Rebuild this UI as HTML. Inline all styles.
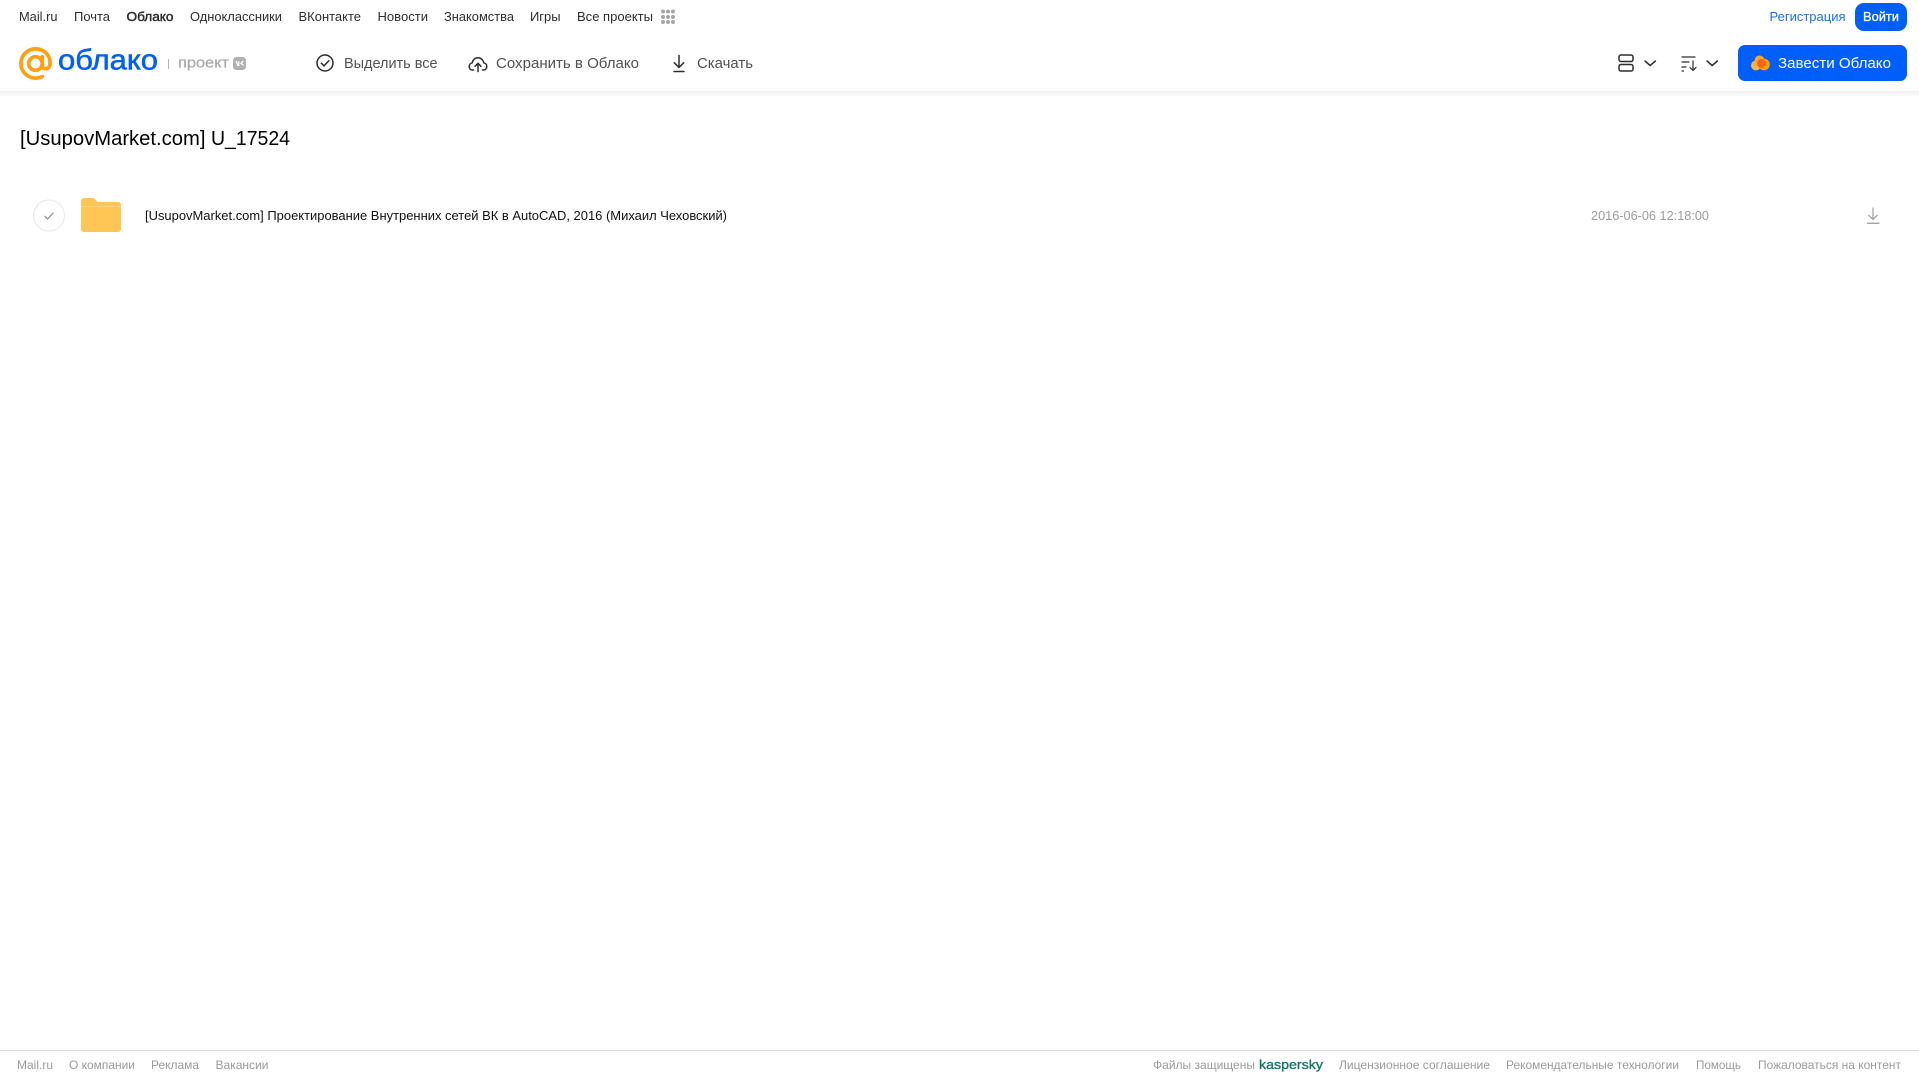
<!DOCTYPE html>
<html lang="ru">
<head>
<meta charset="utf-8">
<title>Облако</title>
<style>
html,body{margin:0;padding:0;background:#fff;width:1919px;height:1079px;overflow:hidden}
svg{display:block;position:absolute;left:0;top:0}
text{font-family:"Liberation Sans",sans-serif;white-space:pre}
.n{font-size:13px;fill:#2c2d2e}
.t{font-size:14.5px;fill:#505153}
.f{font-size:12px;fill:#9a9b9d}
.i{fill:none;stroke:#2c2d2e;stroke-width:1.5;stroke-linecap:round;stroke-linejoin:round}
</style>
</head>
<body>
<svg width="1919" height="1079" viewBox="0 0 1919 1079" xmlns="http://www.w3.org/2000/svg">
<defs>
<linearGradient id="sh" x1="0" y1="0" x2="0" y2="1"><stop offset="0" stop-color="#efeff0"/><stop offset="1" stop-color="#fff"/></linearGradient>
</defs>
<rect x="0" y="91" width="1919" height="6" fill="url(#sh)"/>

<!-- top nav -->
<text class="n" x="19" y="21" textLength="38.500" lengthAdjust="spacingAndGlyphs">Mail.ru</text>
<text class="n" x="74" y="21" textLength="36" lengthAdjust="spacingAndGlyphs">Почта</text>
<text class="n" x="126.500" y="21" textLength="47" lengthAdjust="spacingAndGlyphs" stroke="#2c2d2e" stroke-width=".45">Облако</text>
<text class="n" x="190" y="21" textLength="92" lengthAdjust="spacingAndGlyphs">Одноклассники</text>
<text class="n" x="298.500" y="21" textLength="62.500" lengthAdjust="spacingAndGlyphs">ВКонтакте</text>
<text class="n" x="377.500" y="21" textLength="50.500" lengthAdjust="spacingAndGlyphs">Новости</text>
<text class="n" x="444" y="21" textLength="70" lengthAdjust="spacingAndGlyphs">Знакомства</text>
<text class="n" x="530" y="21" textLength="30.500" lengthAdjust="spacingAndGlyphs">Игры</text>
<text class="n" x="577" y="21" textLength="76" lengthAdjust="spacingAndGlyphs">Все проекты</text>
<g fill="#a5a6a8">
<circle cx="663" cy="11.500" r="2"/><circle cx="668" cy="11.500" r="2"/><circle cx="673" cy="11.500" r="2"/>
<circle cx="663" cy="17" r="2"/><circle cx="668" cy="17" r="2"/><circle cx="673" cy="17" r="2"/>
<circle cx="663" cy="22" r="2"/><circle cx="668" cy="22" r="2"/><circle cx="673" cy="22" r="2"/>
</g>
<text x="1769.500" y="21" font-size="13" fill="#1f6fe8" textLength="76" lengthAdjust="spacingAndGlyphs">Регистрация</text>
<rect x="1855" y="3" width="52" height="28" rx="9" fill="#005ff9"/>
<text x="1863" y="21" font-size="13" fill="#fff" stroke="#fff" stroke-width=".3" textLength="36" lengthAdjust="spacingAndGlyphs">Войти</text>

<!-- logo -->
<g fill="none" stroke="#ffa012" stroke-width="3.700" stroke-linecap="round">
<circle cx="35.500" cy="63.500" r="6.800"/>
<path d="M42.300 56.800v8.400c0 5 7.600 5 7.800-1.500.2-8.500-6-14.800-14.600-14.800-8.100 0-14.600 6.500-14.600 14.600s6.500 14.600 14.600 14.600c2.600 0 4.800-.6 6.800-1.600"/>
</g>
<text x="58" y="69.500" font-size="29" fill="#005ff9" stroke="#005ff9" stroke-width=".55" textLength="100" lengthAdjust="spacingAndGlyphs">облако</text>
<rect x="168" y="59" width="1" height="10" fill="#b5b6b8"/>
<text x="178" y="67.500" font-size="14.500" fill="#a9aaac" stroke="#a9aaac" stroke-width=".25" textLength="51" lengthAdjust="spacingAndGlyphs">проект</text>
<rect x="233" y="57" width="13" height="13" rx="3.500" fill="#b0b1b3"/>
<path d="M236 61l1.800 4.500h1V61M243.500 61l-2.500 2.300 2.700 2.200" fill="none" stroke="#fff" stroke-width="1.200"/>

<!-- actions -->
<circle class="i" cx="325" cy="63" r="8"/>
<path class="i" d="M321.300 63.200l2.700 2.700 4.800-5.200"/>
<text class="t" x="344" y="68" textLength="93.500" lengthAdjust="spacingAndGlyphs">Выделить все</text>
<path class="i" d="M473.500 70h-1c-2 0-3.300-1.600-3.300-3.500 0-1.900 1.300-3.400 3-3.600.5-3 2.900-5.100 5.800-5.100 3 0 5.300 2.200 5.800 5.100 1.800.2 3 1.700 3 3.600 0 1.900-1.400 3.500-3.300 3.500h-1"/>
<path class="i" d="M478 71.500v-8M475 66.300l3-3 3 3"/>
<text class="t" x="496" y="68" textLength="143" lengthAdjust="spacingAndGlyphs">Сохранить в Облако</text>
<path class="i" d="M679 55.500v12M674.300 62.800l4.700 4.700 4.700-4.700M674 71.500h10"/>
<text class="t" x="697" y="68" textLength="56" lengthAdjust="spacingAndGlyphs">Скачать</text>

<!-- right controls -->
<rect class="i" x="1619" y="55" width="14" height="6.500" rx="2"/>
<rect class="i" x="1619" y="64.500" width="14" height="6.500" rx="2"/>
<path class="i" d="M1645 61l5.200 4.500 5.200-4.500"/>
<path class="i" style="stroke-width:1.200" d="M1682 57h13M1682 62h7M1682 67h4M1682 71h1.500M1693 61v9M1690 67.500l3 3 3-3"/>
<path class="i" d="M1707 61l5.200 4.500 5.200-4.500"/>
<rect x="1738" y="45" width="169" height="36" rx="7" fill="#005ff9"/>
<circle cx="1756" cy="65.500" r="5" fill="#ffb347"/>
<circle cx="1759.500" cy="60.500" r="5" fill="#ffa62b"/>
<circle cx="1764" cy="64.500" r="5.800" fill="#ff9e00"/>
<circle cx="1761.500" cy="63.500" r="4.500" fill="#f5641e"/>
<text x="1778" y="68" font-size="14.500" fill="#fff" textLength="113" lengthAdjust="spacingAndGlyphs">Завести Облако</text>

<!-- title -->
<text x="20" y="145" font-size="20" fill="#000" textLength="185.500" lengthAdjust="spacingAndGlyphs">[UsupovMarket.com]</text>
<text x="211" y="145" font-size="20" fill="#000" textLength="79" lengthAdjust="spacingAndGlyphs">U_17524</text>

<!-- row -->
<circle cx="49" cy="215.500" r="15.500" fill="#fff" stroke="#e7e8ea" stroke-width="1"/>
<path d="M44.500 216l3 3 6-6.500" fill="none" stroke="#9a9b9d" stroke-width="1.300"/>
<path d="M81 201c0-1.700 1.300-3 3-3h8.500c1.600 0 2.400.7 3.200 1.700l1.600 2.300H118c1.700 0 3 1.300 3 3v3H81z" fill="#ffc555"/>
<path d="M81 206h40v23c0 1.700-1.300 3-3 3H84c-1.700 0-3-1.300-3-3z" fill="#ffc555"/>
<rect x="81" y="206" width="40" height="1" fill="#ffd27a"/>
<text x="145" y="220" font-size="12.500" fill="#111" textLength="582" lengthAdjust="spacingAndGlyphs">[UsupovMarket.com] Проектирование Внутренних сетей ВК в AutoCAD, 2016 (Михаил Чеховский)</text>
<text x="1591" y="220" font-size="12.500" fill="#9a9b9d" textLength="118" lengthAdjust="spacingAndGlyphs">2016-06-06 12:18:00</text>
<path d="M1873 207.500v12M1868.500 215l4.500 4.500 4.500-4.500" fill="none" stroke="#a5a6a8" stroke-width="1.300"/>
<rect x="1867" y="222.500" width="12.500" height="1.500" fill="#a5a6a8"/>

<!-- footer -->
<rect x="0" y="1050" width="1919" height="1" fill="#d9dadb"/>
<text class="f" x="17" y="1069" textLength="36" lengthAdjust="spacingAndGlyphs">Mail.ru</text>
<text class="f" x="69" y="1069" textLength="66" lengthAdjust="spacingAndGlyphs">О компании</text>
<text class="f" x="151" y="1069" textLength="48" lengthAdjust="spacingAndGlyphs">Реклама</text>
<text class="f" x="215.500" y="1069" textLength="53" lengthAdjust="spacingAndGlyphs">Вакансии</text>
<text class="f" x="1153" y="1069" textLength="102" lengthAdjust="spacingAndGlyphs">Файлы защищены</text>
<text x="1259" y="1069" font-size="13" fill="#11795f" stroke="#11795f" stroke-width=".35" textLength="64" lengthAdjust="spacingAndGlyphs">kaspersky</text>
<text class="f" x="1339" y="1069" textLength="151" lengthAdjust="spacingAndGlyphs">Лицензионное соглашение</text>
<text class="f" x="1506" y="1069" textLength="173" lengthAdjust="spacingAndGlyphs">Рекомендательные технологии</text>
<text class="f" x="1696" y="1069" textLength="45" lengthAdjust="spacingAndGlyphs">Помощь</text>
<text class="f" x="1758" y="1069" textLength="143" lengthAdjust="spacingAndGlyphs">Пожаловаться на контент</text>
</svg>
</body>
</html>
